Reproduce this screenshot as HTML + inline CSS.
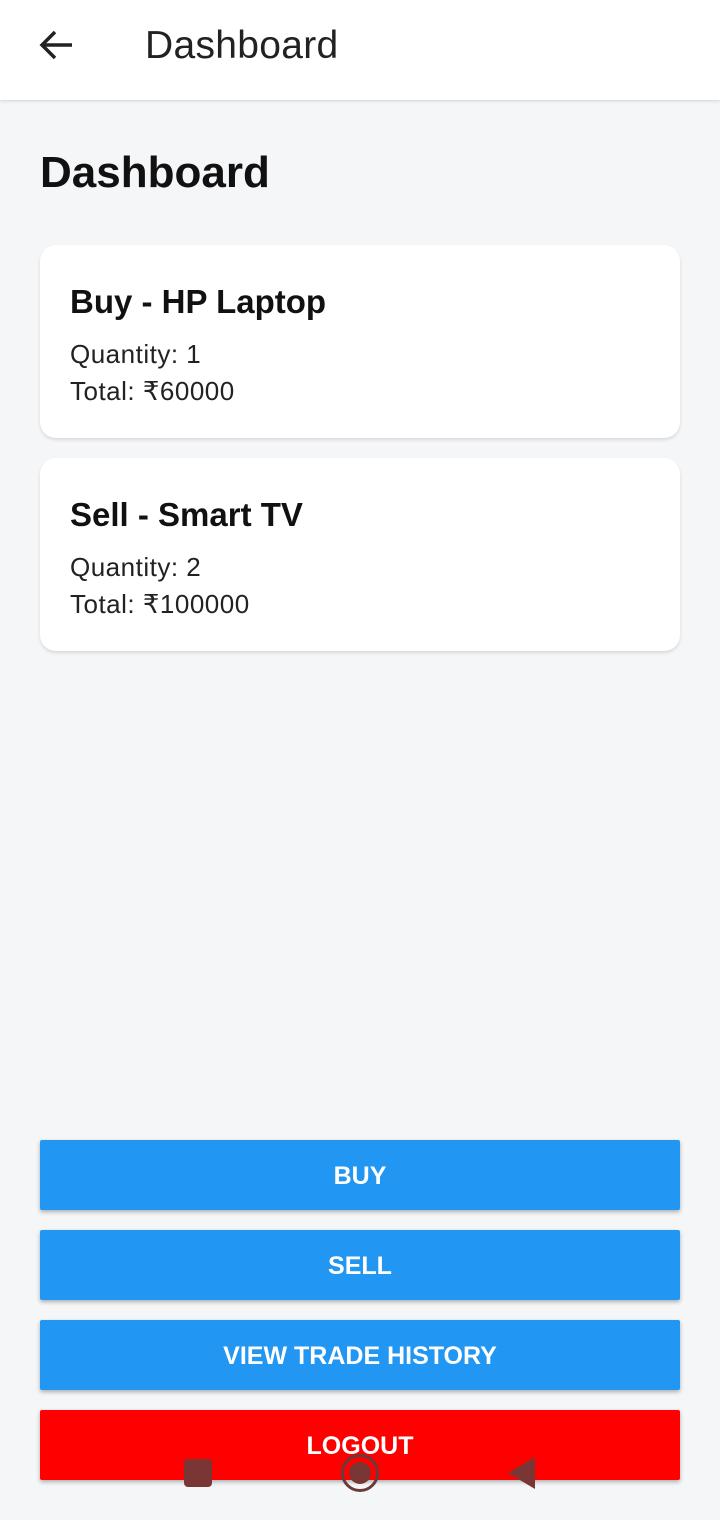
<!DOCTYPE html><html><head><style>
body{margin:0;width:720px;height:1520px;background:#f5f6f8;font-family:"Liberation Sans",sans-serif;position:relative;overflow:hidden}
.top{position:absolute;left:0;top:0;width:720px;height:100px;background:#fff;box-shadow:0 1px 3px rgba(0,0,0,.15)}
.top .t{position:absolute;left:145px;top:24px;font-size:39px;color:#222;letter-spacing:.3px}
h1{position:absolute;left:40px;top:148px;margin:0;font-size:44px;color:#111}
.card{position:absolute;left:40px;width:640px;height:193px;background:#fff;border-radius:16px;box-shadow:0 2px 3px rgba(0,0,0,.12)}
.card b{position:absolute;left:30px;top:38px;font-size:33px;color:#111}
.card p{position:absolute;left:30px;margin:0;font-size:26px;color:#222;letter-spacing:.5px}
.btn{position:absolute;left:40px;width:640px;height:70px;background:#2196f3;color:#fff;font-size:25px;font-weight:bold;text-align:center;line-height:72px;box-shadow:0 2px 4px rgba(0,0,0,.3);border-radius:2px}
</style></head><body>
<div class="top"><svg style="position:absolute;left:38px;top:27px" width="36" height="36" viewBox="0 0 36 36"><path d="M34 18H5M17 5L4 18l13 13" stroke="#222" stroke-width="3.5" fill="none"/></svg><div class="t">Dashboard</div></div>
<h1>Dashboard</h1>
<div class="card" style="top:245px"><b>Buy - HP Laptop</b><p style="top:94px">Quantity: 1</p><p style="top:131px">Total: ₹60000</p></div>
<div class="card" style="top:458px"><b>Sell - Smart TV</b><p style="top:94px">Quantity: 2</p><p style="top:131px">Total: ₹100000</p></div>
<div class="btn" style="top:1140px">BUY</div>
<div class="btn" style="top:1230px">SELL</div>
<div class="btn" style="top:1320px">VIEW TRADE HISTORY</div>
<div class="btn" style="top:1410px;background:#ff0000">LOGOUT</div>
<div style="position:absolute;left:184px;top:1459px;width:28px;height:28px;background:#7a3535;border-radius:4px"></div>
<div style="position:absolute;left:341px;top:1454px;width:38px;height:38px;border:3px solid #6a3a3a;border-radius:50%;box-sizing:border-box"></div>
<div style="position:absolute;left:349px;top:1462px;width:22px;height:22px;background:#7a3535;border-radius:50%"></div>
<svg style="position:absolute;left:508px;top:1457px" width="28" height="33"><path d="M27 0V32L0 16Z" fill="#7a3535"/></svg>
</body></html>
